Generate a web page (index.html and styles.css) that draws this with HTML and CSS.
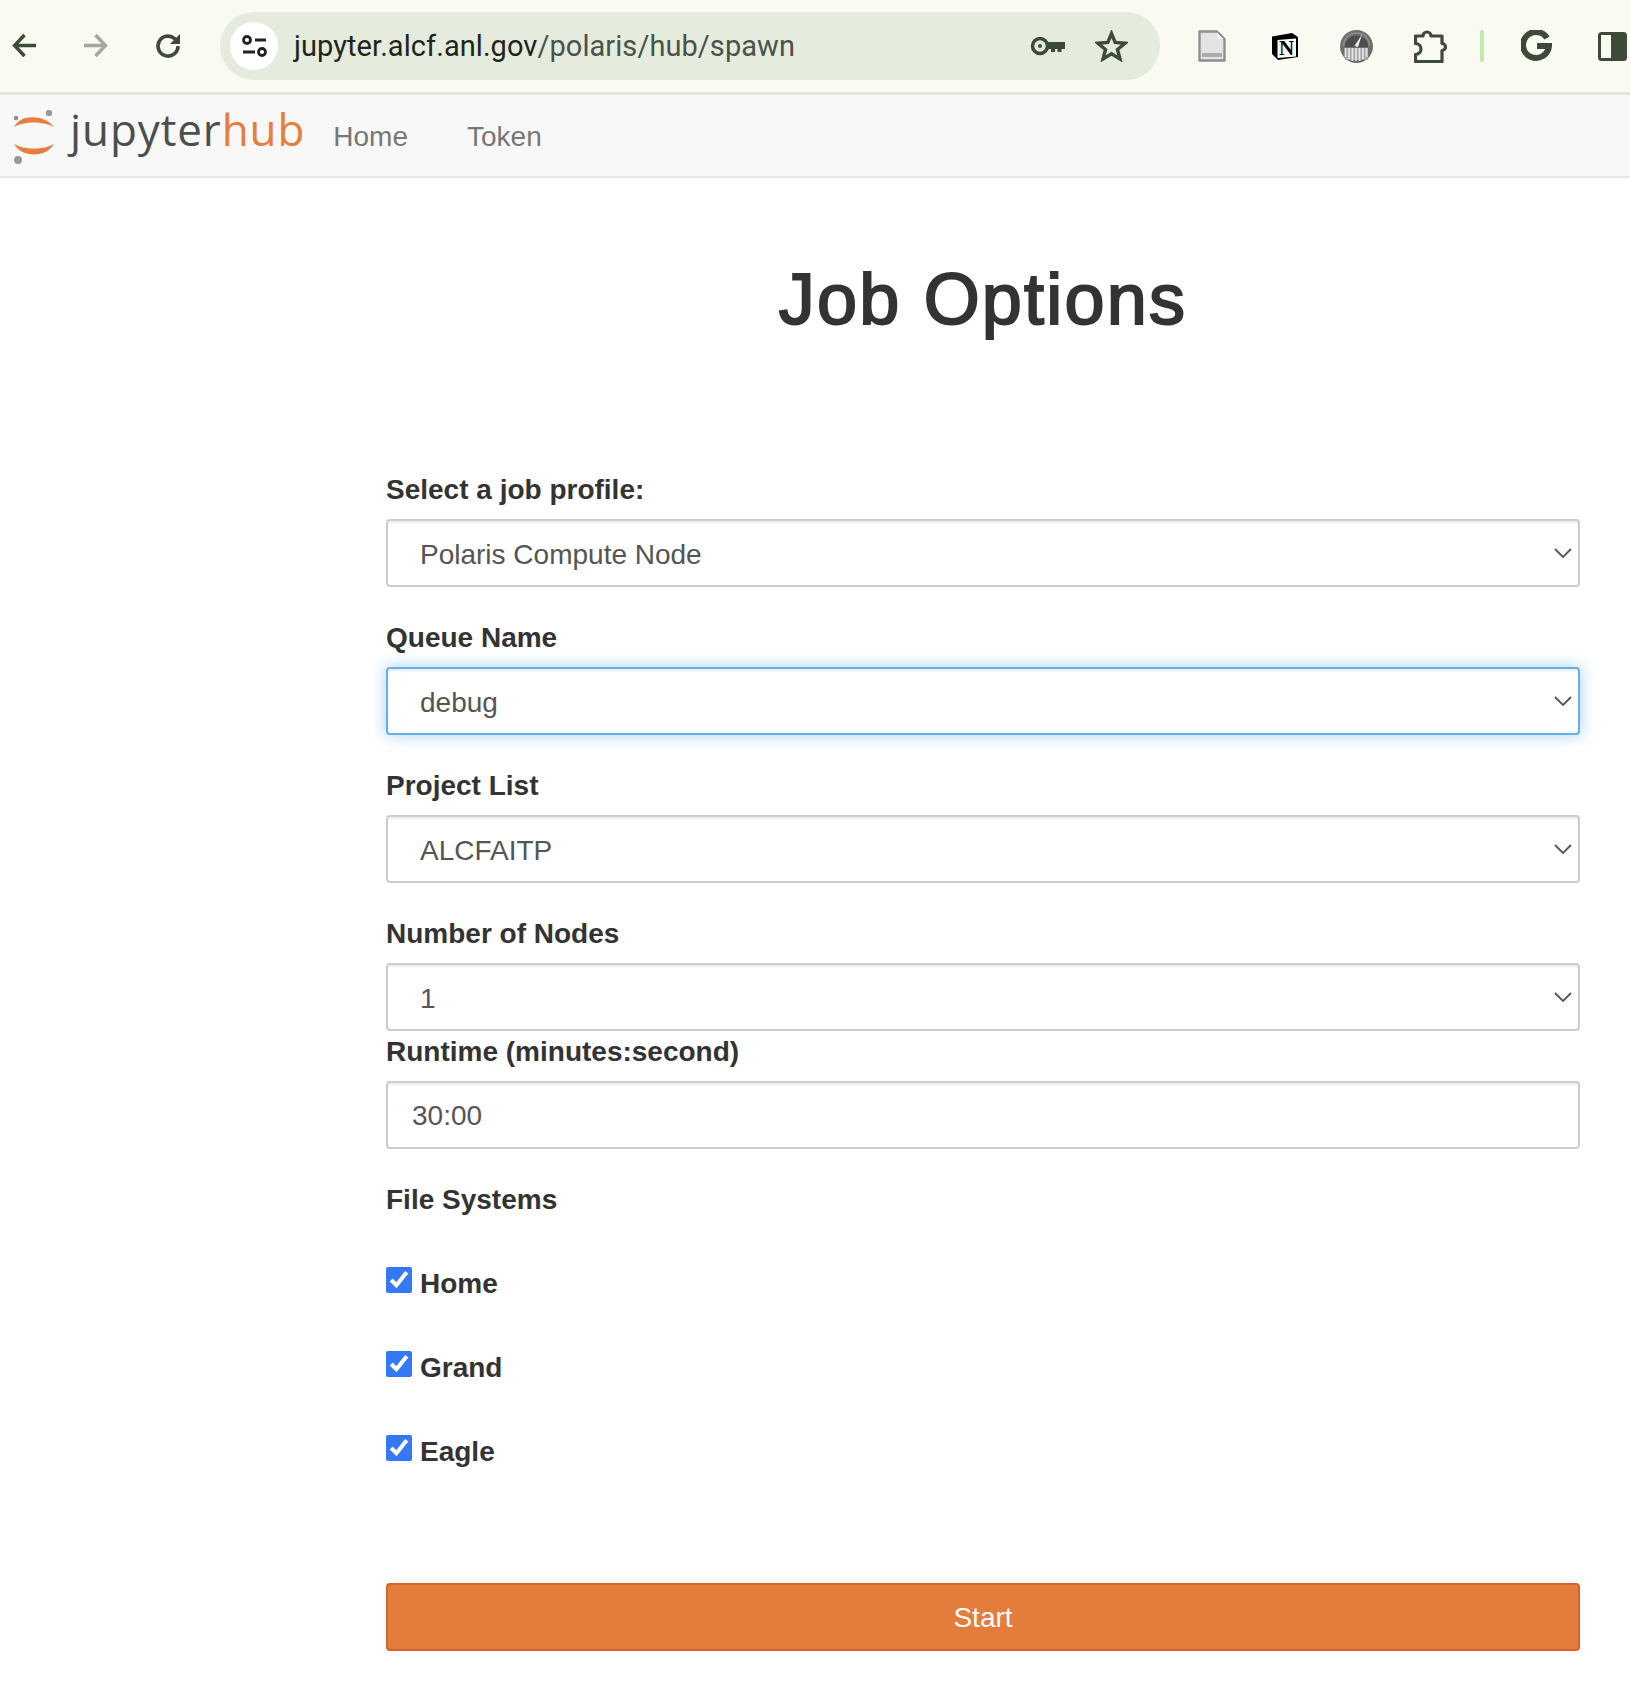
FILE: index.html
```html
<!DOCTYPE html>
<html>
<head>
    <title>Job Options</title>
    <link rel="stylesheet" href="styles.css">
</head>
<body>
    <div class="toolbar">
        <svg class="nav-icon" width="28" height="28" viewBox="0 0 28 28"><path d="M25 13.500H4M13.500 3 3.500 13.500 13.500 24" fill="none" stroke="#3d4a38" stroke-width="3.400"/></svg>
        <svg class="nav-icon" width="28" height="28" viewBox="0 0 28 28"><path d="M2 13.500H23M13.500 3 23.500 13.500 13.500 24" fill="none" stroke="#a3a79e" stroke-width="3.400"/></svg>
        <svg class="nav-icon" width="28" height="28" viewBox="0 0 28 28"><path d="M25 14A10 10 0 1 1 21.500 6.500L24 9" fill="none" stroke="#3d4a38" stroke-width="3.600"/><path d="M27 2V12H17Z" fill="#3d4a38"/></svg>
        <div class="omnibox">
            <div class="tune">
                <svg width="28" height="26" viewBox="0 0 28 26"><circle cx="7" cy="7" r="3.500" fill="none" stroke="#222" stroke-width="2.800"/><path d="M15 7H26M3 19H15" stroke="#222" stroke-width="3"/><circle cx="22" cy="19" r="3.500" fill="none" stroke="#222" stroke-width="2.800"/></svg>
            </div>
            <div class="url"><span class="host">jupyter.alcf.anl.gov</span>/polaris/hub/spawn</div>
            <svg class="key" width="36" height="20" viewBox="0 0 36 20"><circle cx="10" cy="10" r="7.500" fill="none" stroke="#3d4a38" stroke-width="3.500"/><circle cx="10" cy="10" r="2" fill="#3d4a38"/><path d="M18 6H35V13H31.500V16H27.500V13H25V16H21V13H18Z" fill="#3d4a38"/></svg>
            <svg class="star" width="33" height="32" viewBox="0 0 33 32"><path d="M16.500 3.500 20.200 12.500 30 13.200 22.500 19.500 25 29 16.500 23.800 8 29 10.500 19.500 3 13.200 12.800 12.500Z" fill="none" stroke="#3d4a38" stroke-width="3.400" stroke-linejoin="miter"/></svg>
        </div>
        <svg class="ext-page" width="28" height="32" viewBox="0 0 28 32"><path d="M1.500 1.500H19L26.500 9V30.500H1.500Z" fill="#e3e3e3" stroke="#8f8f8f" stroke-width="2.400" stroke-linejoin="round"/><path d="M19 2.500V9H25.500Z" fill="#f6f6f6"/><rect x="4" y="23" width="20" height="4" fill="#ababab"/></svg>
        <svg class="ext-notion" width="28" height="28" viewBox="0 0 28 28"><path d="M1 4.500 21 1 27 5V25L7 28 1 22Z" fill="#000"/><path d="M6.500 8 25 6.500V24.500L6.500 26Z" fill="#fff"/><text class="notion-n" x="15.700" y="22.800" text-anchor="middle">N</text></svg>
        <svg class="ext-gauge" width="33" height="33" viewBox="0 0 33 33"><circle cx="16.500" cy="16.500" r="16.500" fill="#6e6e6e"/><path d="M5 17A11.500 11.500 0 0 1 28 17Z" fill="#4e4e4e"/><path d="M3.500 16A13 13 0 0 1 29.500 16" fill="none" stroke="#8d8d8d" stroke-width="1.500"/><path d="M14.500 16 22 4.500 18 17Z" fill="#f2f2f2"/><path d="M5 18H28V30H5Z" fill="#a5a5a5"/><path d="M5.500 18V27M9 18V29M12.500 18V31M16 18V31M19.500 18V31M23 18V29M26.500 18V27" stroke="#e4e4e4" stroke-width="1.800"/></svg>
        <svg class="ext-puzzle" width="33" height="34" viewBox="0 0 33 34"><path d="M1.500 7H9A4 4 0 0 1 17 7H28V14.500A3.500 3.500 0 0 1 28 21.500V32.500H1.500V25.500A5.500 5.500 0 0 0 1.500 14.500Z" fill="none" stroke="#3d4a38" stroke-width="3.200" stroke-linejoin="round"/></svg>
        <div class="ext-sep"></div>
        <svg class="ext-g" width="31" height="32" viewBox="0 0 31 32"><path d="M26 8A13 13 0 1 0 28 16H16" fill="none" stroke="#3d4a38" stroke-width="6"/></svg>
        <svg class="ext-side" width="29" height="29" viewBox="0 0 29 29"><rect x="1.500" y="1.500" width="26" height="26" rx="2" fill="#3d4a38" stroke="#3d4a38" stroke-width="3"/><rect x="3" y="3" width="10" height="23" fill="#f9faf2"/></svg>
    </div>

    <nav class="navbar">
        <a class="brand" href="#">
            <svg width="46" height="54" viewBox="0 0 46 54"><path d="M2 17C8 4 32 4 42 17 32 11 12 11 2 17Z" fill="#e67e3c"/><path d="M2 34C12 40 32 40 42 34 34 48 10 48 2 34Z" fill="#e67e3c"/><circle cx="37" cy="3" r="3.200" fill="#9a9a9a"/><circle cx="4" cy="8" r="2.200" fill="#8a8a8a"/><circle cx="6" cy="50" r="4" fill="#9a9a9a"/></svg>
            <span class="brand-text">jupyter<span class="brand-hub">hub</span></span>
        </a>
        <a class="nav-link" href="#">Home</a>
        <a class="nav-link" href="#">Token</a>
    </nav>

    <main class="content">
        <h1>Job Options</h1>
        <form>
            <div class="form-group">
                <label for="profile">Select a job profile:</label>
                <div class="select-wrap">
                    <select id="profile"><option>Polaris Compute Node</option></select>
                    <svg class="chevron" width="18" height="10" viewBox="0 0 18 10"><path d="M1 1 9 9 17 1" fill="none" stroke="#555" stroke-width="1.800"/></svg>
                </div>
            </div>
            <div class="form-group">
                <label for="queue">Queue Name</label>
                <div class="select-wrap">
                    <select id="queue" class="focused"><option>debug</option></select>
                    <svg class="chevron" width="18" height="10" viewBox="0 0 18 10"><path d="M1 1 9 9 17 1" fill="none" stroke="#555" stroke-width="1.800"/></svg>
                </div>
            </div>
            <div class="form-group">
                <label for="project">Project List</label>
                <div class="select-wrap">
                    <select id="project"><option>ALCFAITP</option></select>
                    <svg class="chevron" width="18" height="10" viewBox="0 0 18 10"><path d="M1 1 9 9 17 1" fill="none" stroke="#555" stroke-width="1.800"/></svg>
                </div>
            </div>
            <div class="form-group tight">
                <label for="nodes">Number of Nodes</label>
                <div class="select-wrap">
                    <select id="nodes"><option>1</option></select>
                    <svg class="chevron" width="18" height="10" viewBox="0 0 18 10"><path d="M1 1 9 9 17 1" fill="none" stroke="#555" stroke-width="1.800"/></svg>
                </div>
            </div>
            <div class="form-group">
                <label for="runtime">Runtime (minutes:second)</label>
                <input id="runtime" type="text" value="30:00">
            </div>
            <div class="group-title">File Systems</div>
            <label class="check"><input type="checkbox" checked> Home</label>
            <label class="check"><input type="checkbox" checked> Grand</label>
            <label class="check"><input type="checkbox" checked> Eagle</label>
            <button type="button" class="start">Start</button>
        </form>
    </main>
</body>
</html>
```

FILE: styles.css
```css
html, body {
    margin: 0;
    background: white;
}

body {
    font-family: "Liberation Sans", Arial, sans-serif;
    font-size: 28px;
    color: #333;
    overflow: hidden;
}

.toolbar {
    display: flex;
    align-items: center;
    height: 92px;
    padding-left: 11px;
    background-color: #f9faf2;
    border-bottom: 3px solid #e5e6da;
}

.nav-icon {
    flex: none;
    margin-right: 43px;
}

.omnibox {
    flex: none;
    display: flex;
    align-items: center;
    width: 940px;
    height: 68px;
    margin-left: -4px;
    margin-right: 38px;
    padding: 0 32px 0 10px;
    box-sizing: border-box;
    background-color: #e5ebdd;
    border-radius: 34px;
}

.tune {
    display: flex;
    align-items: center;
    justify-content: center;
    width: 48px;
    height: 48px;
    background: white;
    border-radius: 50%;
}

.url {
    margin-left: 16px;
    font-family: Roboto, sans-serif;
    font-size: 29px;
    letter-spacing: 0.06px;
    color: #4a534a;
}

.host {
    color: #1e261c;
}

.key {
    margin-left: auto;
}

.star {
    margin-left: 29px;
}

.toolbar > svg {
    flex: none;
}

.ext-notion {
    margin-left: 45px;
}

.ext-gauge {
    margin-left: 41px;
}

.ext-puzzle {
    margin-left: 41px;
}

.notion-n {
    font-family: "Liberation Serif", serif;
    font-size: 21px;
    font-weight: bold;
    fill: #000;
}

.ext-sep {
    flex: none;
    width: 4px;
    height: 32px;
    margin-left: 33px;
    margin-right: 37px;
    background-color: #c5eab0;
    border-radius: 2px;
}

.ext-side {
    margin-left: 46px;
}

.navbar {
    display: flex;
    align-items: center;
    height: 81px;
    background-color: #f8f8f8;
    border-bottom: 2px solid #e7e7e7;
}

.brand {
    display: flex;
    align-items: center;
    margin-left: 12px;
    margin-right: 28px;
    padding-top: 2px;
    text-decoration: none;
}

.brand-text {
    margin-left: 12px;
    margin-top: -15px;
    font-family: "Open Sans", sans-serif;
    font-size: 44px;
    color: #4e4e4e;
    letter-spacing: 0.9px;
}

.brand-hub {
    color: #e67e3c;
}

.nav-link {
    margin-top: 2px;
    margin-right: 59px;
    color: #777;
    text-decoration: none;
}

.content {
    padding: 0 50px 0 386px;
}

h1 {
    margin: 82px 0 130px;
    font-size: 72px;
    font-weight: normal;
    line-height: 79px;
    text-align: center;
    letter-spacing: 2.2px;
    -webkit-text-stroke: 2px #333;
}

.form-group {
    margin-bottom: 30px;
}

.form-group.tight {
    margin-bottom: 0;
}

.form-group label,
.group-title {
    display: block;
    margin-bottom: 8px;
    font-weight: bold;
    line-height: 42px;
}

.select-wrap {
    position: relative;
}

select,
input[type="text"] {
    display: block;
    width: 100%;
    height: 68px;
    padding: 2px 24px 0;
    box-sizing: border-box;
    font-family: inherit;
    font-size: 28px;
    color: #555;
    background: white;
    border: 2px solid #ccc;
    border-radius: 4px;
    box-shadow: inset 0 2px 2px rgba(0,0,0,0.075);
}

select {
    padding-left: 32px;
    appearance: none;
}

select.focused {
    border-color: #66afe9;
    box-shadow: inset 0 2px 2px rgba(0,0,0,0.075), 0 0 16px rgba(102,175,233,0.6);
}

.chevron {
    position: absolute;
    right: 8px;
    top: 29px;
}

.group-title {
    margin-bottom: 42px;
}

.check {
    display: flex;
    align-items: center;
    gap: 8px;
    height: 40px;
    padding-top: 2px;
    box-sizing: border-box;
    margin-bottom: 44px;
    font-weight: bold;
}

.check input {
    width: 26px;
    height: 26px;
    margin: -8px 0 0;
    accent-color: #3478f6;
}

.start {
    display: block;
    width: 100%;
    height: 68px;
    margin-top: 112px;
    padding-top: 3px;
    font-family: inherit;
    font-size: 28px;
    color: white;
    background-color: #e47c3c;
    border: 2px solid #d9622c;
    border-radius: 4px;
}
```
